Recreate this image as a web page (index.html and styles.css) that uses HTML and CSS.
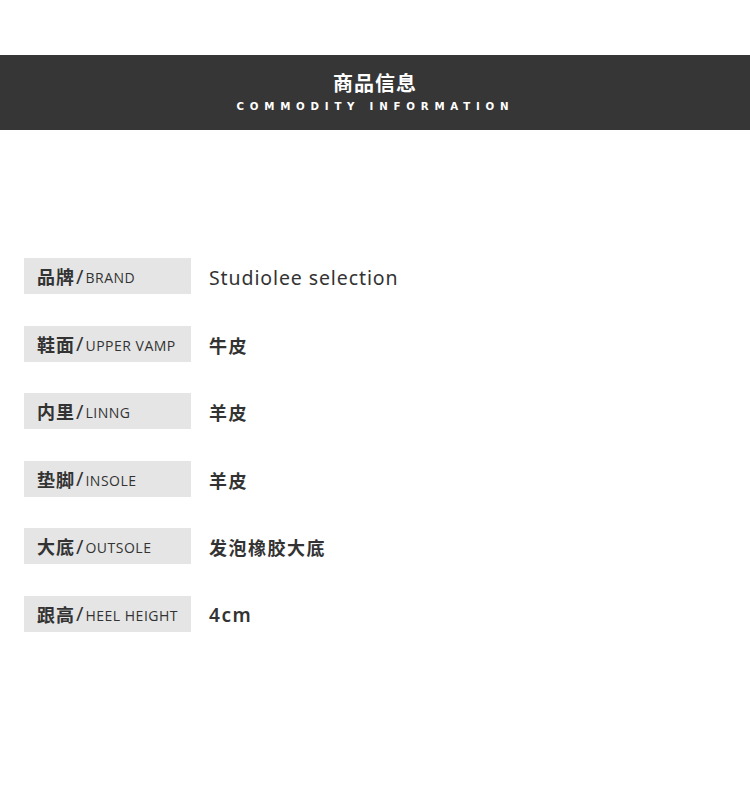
FILE: index.html
```html
<!DOCTYPE html>
<html lang="zh">
<head>
<meta charset="utf-8">
<link rel="stylesheet" href="styles.css">
</head>
<body>
<header class="banner">
  <h1 class="banner-title">商品信息</h1>
  <p class="banner-sub">COMMODITY INFORMATION</p>
</header>
<section class="specs">
  <div class="row"><div class="label"><b>品牌</b><span class="slash">/</span><span class="en">BRAND</span></div><div class="value latin">Studiolee selection</div></div>
  <div class="row"><div class="label"><b>鞋面</b><span class="slash">/</span><span class="en">UPPER VAMP</span></div><div class="value">牛皮</div></div>
  <div class="row"><div class="label"><b>内里</b><span class="slash">/</span><span class="en">LINNG</span></div><div class="value">羊皮</div></div>
  <div class="row"><div class="label"><b>垫脚</b><span class="slash">/</span><span class="en">INSOLE</span></div><div class="value">羊皮</div></div>
  <div class="row"><div class="label"><b>大底</b><span class="slash">/</span><span class="en">OUTSOLE</span></div><div class="value">发泡橡胶大底</div></div>
  <div class="row"><div class="label"><b>跟高</b><span class="slash">/</span><span class="en">HEEL HEIGHT</span></div><div class="value num">4cm</div></div>
</section>
</body>
</html>
```
FILE: styles.css
```css
* { box-sizing: border-box; }
html, body { margin: 0; padding: 0; background: #fff; }
body {
  width: 750px;
  height: 812px;
  font-family: "Noto Sans", "Noto Sans CJK SC", sans-serif;
  color: #333;
  padding-top: 55px;
}
.banner {
  height: 75px;
  background: #363636;
  color: #fff;
  display: flex;
  flex-direction: column;
  align-items: center;
  padding-top: 14px;
}
.banner-title {
  margin: 0;
  font-family: "Noto Sans CJK SC", sans-serif;
  font-size: 20px;
  font-weight: 700;
  line-height: 28px;
  letter-spacing: 1px;
}
.banner-sub {
  margin: 3px 0 0 0;
  font-family: "DejaVu Sans", sans-serif;
  font-size: 11px;
  line-height: 14px;
  letter-spacing: 6.2px;
  font-weight: 700;
  transform: scaleX(0.93);
}
.specs {
  margin-top: 128px;
  padding-left: 24px;
  display: flex;
  flex-direction: column;
  gap: 31.6px;
}
.row {
  display: flex;
  align-items: center;
  height: 36px;
}
.label {
  width: 167px;
  height: 36px;
  background: #e5e5e5;
  display: flex;
  align-items: center;
  padding-left: 13px;
  white-space: nowrap;
}
.label b {
  font-family: "Noto Sans CJK SC", sans-serif;
  font-size: 18px;
  font-weight: 700;
  color: #333;
  letter-spacing: 1px;
}
.slash {
  font-family: "Noto Sans", sans-serif;
  font-size: 20px;
  color: #333;
  margin: 0 2px 0 1px;
}
.en {
  font-family: "Open Sans", sans-serif;
  font-size: 14px;
  color: #333;
  padding-top: 3px;
  letter-spacing: 0.5px;
}
.value {
  margin-left: 18px;
  padding-top: 2px;
  font-family: "Noto Sans CJK SC", sans-serif;
  font-size: 18px;
  font-weight: 700;
  color: #333;
  letter-spacing: 1.5px;
}
.value.latin {
  font-family: "Noto Sans", sans-serif;
  font-weight: 400;
  font-size: 19.5px;
  letter-spacing: 0.9px;
  padding-top: 3px;
}
.value.num {
  font-family: "Noto Sans", sans-serif;
  font-weight: 600;
  font-size: 19px;
  letter-spacing: 1.6px;
}
```
